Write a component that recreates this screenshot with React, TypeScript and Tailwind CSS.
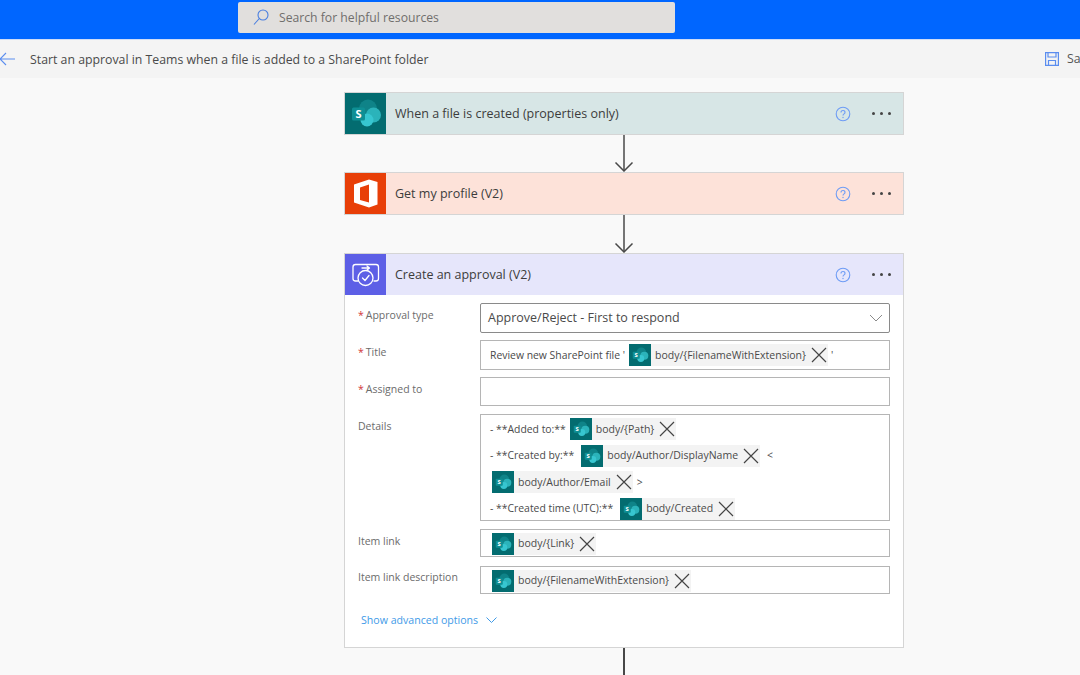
import React from "react";

const font = { fontFamily: '"Open Sans", "Noto Sans", sans-serif' };

function SharePointIcon({ size }: { size: number }) {
  return (
    <svg width={size} height={size} viewBox="0 0 41 41" className="shrink-0">
      <rect width="41" height="41" fill="#036c70" />
      <circle cx="23" cy="15.500" r="9" fill="#0f8388" />
      <circle cx="28.500" cy="22" r="7.500" fill="#2bb3ba" />
      <circle cx="22" cy="27" r="6.500" fill="#37c6d0" />
      <rect x="7" y="14.500" width="13" height="13" rx="1.500" fill="#0e8f94" />
      <text x="13.500" y="25" textAnchor="middle" fontSize="11" fontWeight="700" fill="#fff" fontFamily="Open Sans, sans-serif">
        S
      </text>
    </svg>
  );
}

function OfficeIcon() {
  return (
    <svg width="41" height="41" viewBox="0 0 41 41" className="shrink-0">
      <rect width="41" height="41" fill="#e83f08" />
      <path
        fill="#fff"
        d="M9 11.500 L24 6.500 L32.500 9 V31.500 L24 34.500 L9 29.500 Z M15 27 L24 29.500 V11.500 L15 14.500 Z"
      />
    </svg>
  );
}

function ApprovalIcon() {
  return (
    <svg width="41" height="41" viewBox="0 0 41 41" className="shrink-0" fill="none" stroke="#fff" strokeWidth="1.300" strokeLinecap="round" strokeLinejoin="round">
      <rect width="41" height="41" fill="#5d5fe6" stroke="none" />
      <path d="M13 27 H10.500 Q8 27 8 24.500 V13 Q8 10.500 10.500 10.500 H31 Q33.500 10.500 33.500 13 V24.500 Q33.500 27 31 27 H29" />
      <circle cx="20.500" cy="24" r="7.500" />
      <path d="M17.500 24 L20 26.500 L24 21.500" />
      <path d="M17 14 H24 M22 12 L24.500 14 L22 16" />
    </svg>
  );
}

function HelpIcon() {
  return (
    <svg width="16" height="16" viewBox="0 0 16 16" fill="none" className="shrink-0">
      <circle cx="8" cy="8" r="6.800" stroke="#6e9cf5" strokeWidth="1.100" />
      <path d="M6 6.400 C6 3.900 10 3.900 10 6.400 C10 8 8 7.800 8 9.600" stroke="#6e9cf5" strokeWidth="1.100" fill="none" />
      <circle cx="8" cy="11.500" r="0.700" fill="#6e9cf5" />
    </svg>
  );
}

function Dots() {
  return (
    <div className="flex items-center gap-[5px] w-[20px] shrink-0">
      <span className="w-[3px] h-[3px] rounded-full bg-[#444]" />
      <span className="w-[3px] h-[3px] rounded-full bg-[#444]" />
      <span className="w-[3px] h-[3px] rounded-full bg-[#444]" />
    </div>
  );
}

function Arrow({ height }: { height: number }) {
  return (
    <div className="flex justify-center w-full">
      <svg width="20" height={height} viewBox={`0 0 20 ${height}`} fill="none" stroke="#484848" strokeWidth="1.500">
        <path d={`M10 0 V${height - 1}`} />
        <path d={`M1.500 ${height - 9.500} L10 ${height - 1} L18.500 ${height - 9.500}`} />
      </svg>
    </div>
  );
}

function CardHeader({ bg, icon, title }: { bg: string; icon: React.ReactNode; title: string }) {
  return (
    <div className={`flex items-center h-[41px] ${bg}`}>
      {icon}
      <span className="ml-[9px] pt-[1px] text-[12.500px] text-[#3c3c3c]">{title}</span>
      <div className="ml-auto flex items-center">
        <HelpIcon />
        <div className="w-[21px]" />
        <Dots />
        <div className="w-[11px]" />
      </div>
    </div>
  );
}

function Token({ label }: { label: string }) {
  return (
    <span className="inline-flex items-center h-[22px] bg-[#f3f3f3] shrink-0">
      <SharePointIcon size={22} />
      <span className="ml-[4px] pt-[1px] text-[10.500px] text-[#4a4a4a] whitespace-nowrap">{label}</span>
      <svg width="16" height="16" viewBox="0 0 16 16" className="ml-[5px] mr-[1px]" stroke="#444" strokeWidth="1.200" fill="none">
        <path d="M1 1 L15 15 M15 1 L1 15" />
      </svg>
    </span>
  );
}

function Label({ text, required, className }: { text: string; required?: boolean; className?: string }) {
  return (
    <div className={`w-[122px] shrink-0 text-[10.500px] text-[#6b6b6b] ${className ?? ""}`}>
      {required && <span className="text-[#d13438] mr-[2px]">*</span>}
      {text}
    </div>
  );
}

function Field({ children, className }: { children?: React.ReactNode; className?: string }) {
  return (
    <div className={`w-[410px] shrink-0 border border-[#b5b5b5] bg-white flex items-center ${className ?? ""}`}>
      {children}
    </div>
  );
}

function Txt({ children, className }: { children: React.ReactNode; className?: string }) {
  return <span className={`pt-[1px] text-[10.400px] text-[#4a4a4a] whitespace-nowrap ${className ?? ""}`}>{children}</span>;
}

export default function App() {
  return (
    <div className="w-[1080px] h-[675px] overflow-hidden bg-[#f9f9f9]" style={font}>
      <div className="h-[39px] bg-[#0066ff] pl-[238px] pt-[2px]">
        <div className="w-[437px] h-[31px] rounded-[2px] bg-[#e1dfdd] flex items-center pl-[15px]">
          <svg width="16" height="17" viewBox="0 0 16 17" fill="none" stroke="#4a7fe0" strokeWidth="1.100">
            <circle cx="10" cy="6" r="5" />
            <path d="M6.300 9.500 L1 15.500" />
          </svg>
          <span className="ml-[10px] pt-[2px] text-[12.200px] text-[#706e6c]">Search for helpful resources</span>
        </div>
      </div>
      <div className="h-[1px] bg-[#cfdcf7]" />
      <div className="h-[38px] bg-[#f4f4f4] flex items-center">
        <svg width="16" height="14" viewBox="0 0 16 14" fill="none" stroke="#5b8def" strokeWidth="1.100" className="ml-[-1px] shrink-0">
          <path d="M16 7 H1 M7 1 L1 7 L7 13" />
        </svg>
        <span className="ml-[15px] pt-[2px] text-[12.300px] text-[#4a4a4a]">
          Start an approval in Teams when a file is added to a SharePoint folder
        </span>
        <div className="ml-auto w-[35px] flex items-center overflow-hidden shrink-0">
          <svg width="14" height="14" viewBox="0 0 14 14" fill="none" stroke="#5b8def" strokeWidth="1.200" className="shrink-0">
            <path d="M0.600 0.600 H13.400 V13.400 H0.600 Z M3 0.600 V5 H11 V0.600 M3.500 13.400 V8.500 H10.500 V13.400" />
          </svg>
          <span className="ml-[8px] text-[12.300px] text-[#555] whitespace-nowrap">Save</span>
        </div>
      </div>

      <div className="ml-[344px] w-[560px] pt-[14px]">
        <div className="border border-[#d5d5d5]">
          <CardHeader bg="bg-[#d7e6e6]" icon={<SharePointIcon size={41} />} title="When a file is created (properties only)" />
        </div>
        <Arrow height={37} />
        <div className="border border-[#d5d5d5]">
          <CardHeader bg="bg-[#fde2d9]" icon={<OfficeIcon />} title="Get my profile (V2)" />
        </div>
        <Arrow height={38} />
        <div className="border border-[#d5d5d5] bg-white">
          <CardHeader bg="bg-[#e6e6fb]" icon={<ApprovalIcon />} title="Create an approval (V2)" />
          <div className="pl-[13px] pt-[8px] h-[352px]">
            <div className="flex">
              <Label text="Approval type" required className="pt-[5px]" />
              <div className="w-[410px] h-[30px] shrink-0 border border-[#8a8a8a] rounded-[2px] flex items-center pl-[7px] pr-[6px]">
                <span className="text-[12.500px] text-[#4a4a4a]">Approve/Reject - First to respond</span>
                <svg width="14" height="8" viewBox="0 0 14 8" fill="none" stroke="#8a8a8a" strokeWidth="1" className="ml-auto">
                  <path d="M1 1 L7 7 L13 1" />
                </svg>
              </div>
            </div>
            <div className="flex mt-[7px]">
              <Label text="Title" required className="pt-[5px]" />
              <Field className="h-[30px] pl-[9px]">
                <Txt>Review new SharePoint file '</Txt>
                <span className="w-[4px]" />
                <Token label="body/{FilenameWithExtension}" />
                <Txt className="ml-[3px]">'</Txt>
              </Field>
            </div>
            <div className="flex mt-[7px]">
              <Label text="Assigned to" required className="pt-[5px]" />
              <Field className="h-[29px]" />
            </div>
            <div className="flex mt-[8px]">
              <Label text="Details" className="pt-[5px]" />
              <Field className="h-[107px] pl-[9px] !items-start flex-col pt-[3px] gap-[4.500px]">
                <div className="flex items-center h-[22px]">
                  <Txt>- **Added to:**</Txt>
                  <span className="w-[4px]" />
                  <Token label="body/{Path}" />
                </div>
                <div className="flex items-center h-[22px]">
                  <Txt>- **Created by:**</Txt>
                  <span className="w-[7px]" />
                  <Token label="body/Author/DisplayName" />
                  <Txt className="ml-[7px]">&lt;</Txt>
                </div>
                <div className="flex items-center h-[22px] ml-[2px]">
                  <Token label="body/Author/Email" />
                  <Txt className="ml-[4px]">&gt;</Txt>
                </div>
                <div className="flex items-center h-[22px]">
                  <Txt>- **Created time (UTC):**</Txt>
                  <span className="w-[7px]" />
                  <Token label="body/Created" />
                </div>
              </Field>
            </div>
            <div className="flex mt-[8px]">
              <Label text="Item link" className="pt-[5px]" />
              <Field className="h-[28px] pl-[11px] pt-[1px]">
                <Token label="body/{Link}" />
              </Field>
            </div>
            <div className="flex mt-[9px]">
              <Label text="Item link description" className="pt-[4px]" />
              <Field className="h-[28px] pl-[11px] pt-[1px]">
                <Token label="body/{FilenameWithExtension}" />
              </Field>
            </div>
            <div className="flex items-center mt-[19px] pl-[3px]">
              <span className="text-[10.600px] text-[#3f9be8]">Show advanced options</span>
              <svg width="11" height="7" viewBox="0 0 11 7" fill="none" stroke="#3f9be8" strokeWidth="1" className="ml-[8px]">
                <path d="M0.500 0.500 L5.500 5.500 L10.500 0.500" />
              </svg>
            </div>
          </div>
        </div>
        <div className="flex justify-center w-full">
          <div className="w-[2px] h-[30px] bg-[#484848]" />
        </div>
      </div>
    </div>
  );
}
